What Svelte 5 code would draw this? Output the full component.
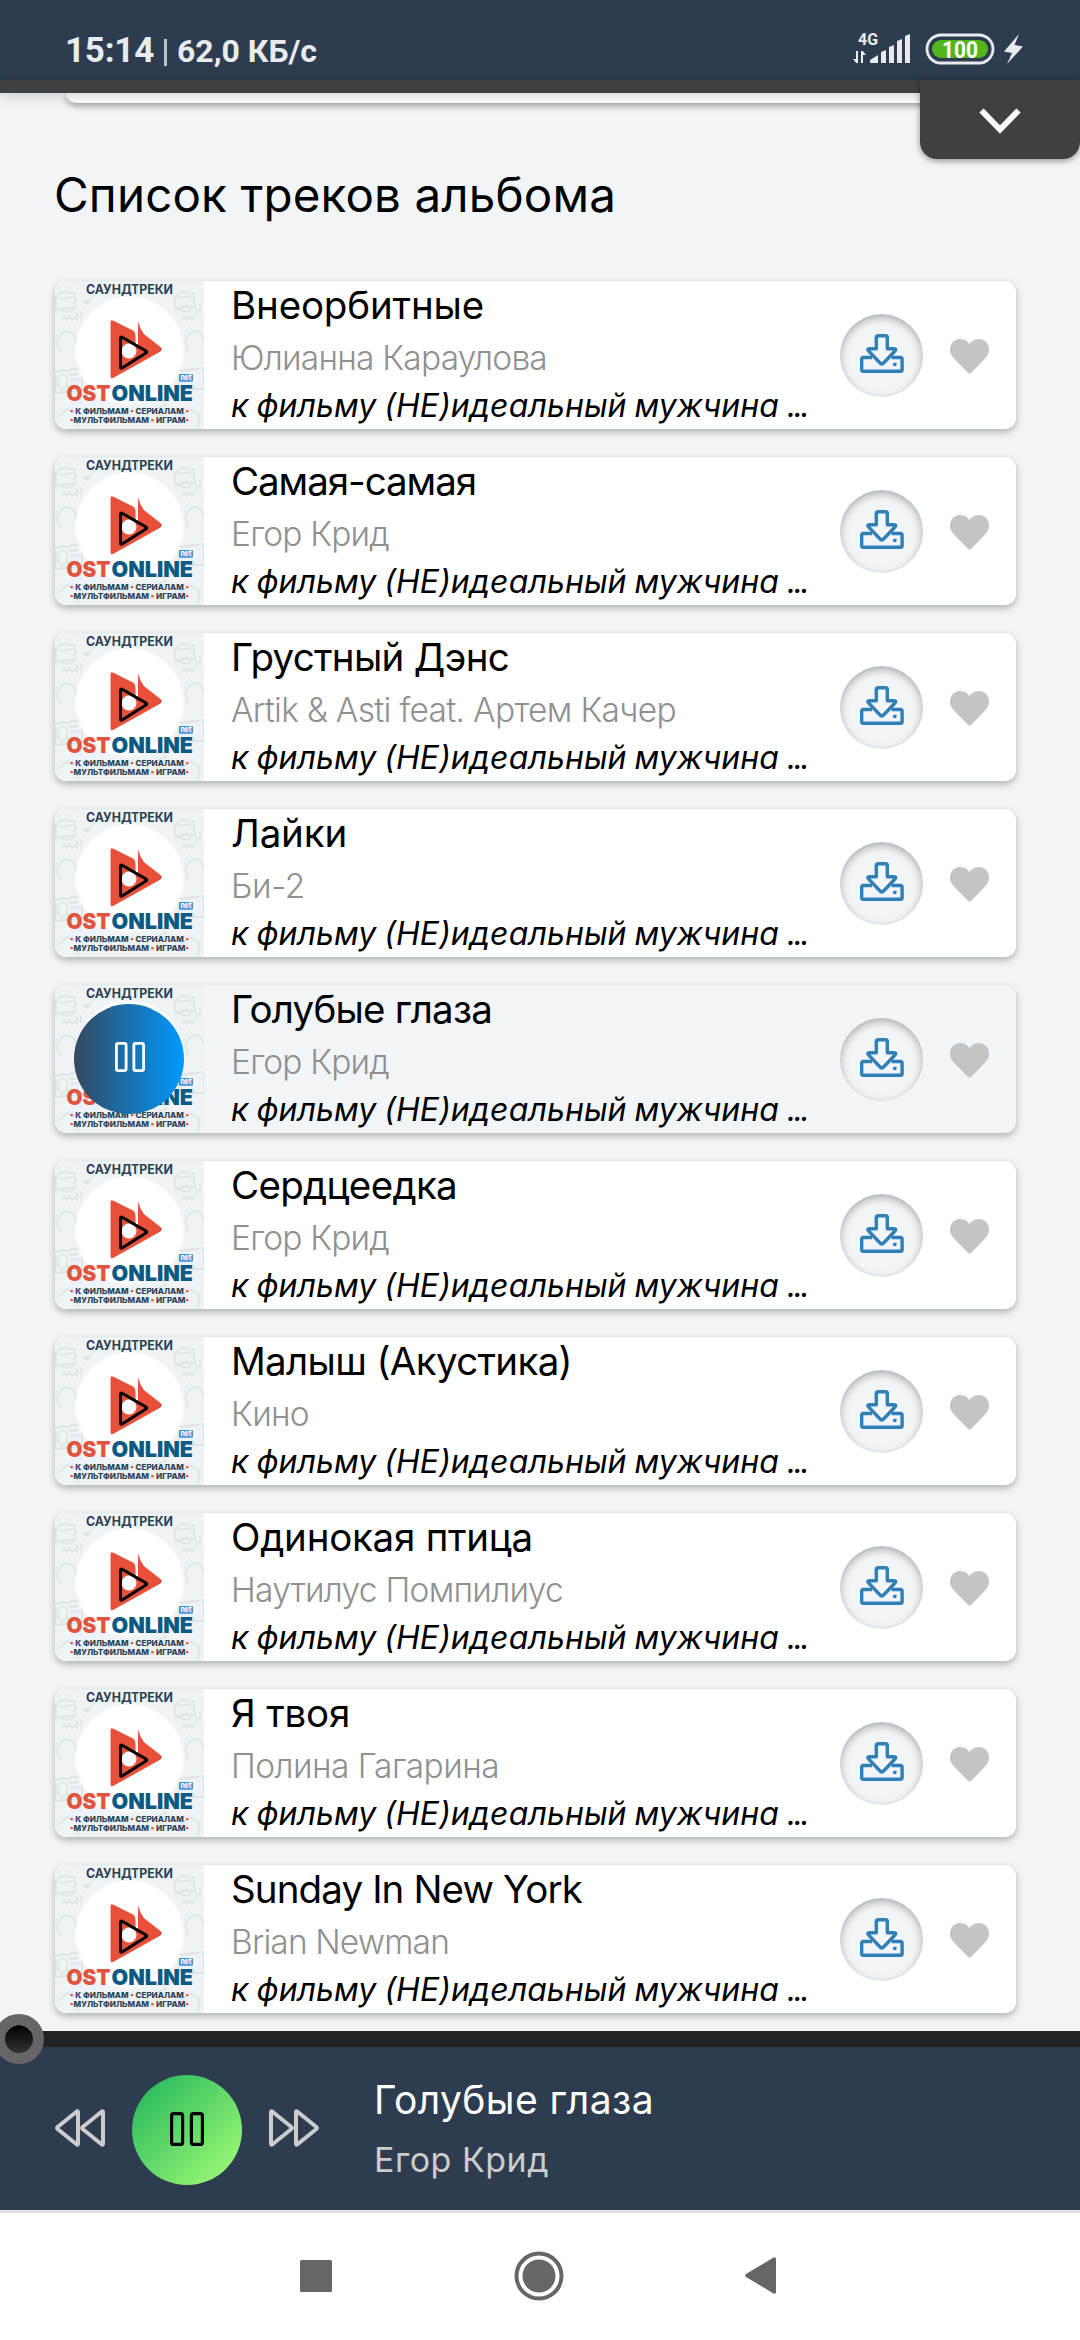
<script lang="ts">
  interface Track {
    title: string;
    artist: string;
    titleWidth: number;
    artistWidth: number;
    album?: string;
    active?: boolean;
  }

  const ALBUM = "к фильму (НЕ)идеальный мужчина";

  const tracks: Track[] = [
    { title: "Внеорбитные", artist: "Юлианна Караулова", titleWidth: 253, artistWidth: 316 },
    { title: "Самая-самая", artist: "Егор Крид", titleWidth: 245, artistWidth: 158 },
    { title: "Грустный Дэнс", artist: "Artik & Asti feat. Артем Качер", titleWidth: 278, artistWidth: 445 },
    { title: "Лайки", artist: "Би-2", titleWidth: 116, artistWidth: 74 },
    { title: "Голубые глаза", artist: "Егор Крид", titleWidth: 261, artistWidth: 158, active: true },
    { title: "Сердцеедка", artist: "Егор Крид", titleWidth: 226, artistWidth: 158 },
    { title: "Малыш (Акустика)", artist: "Кино", titleWidth: 341, artistWidth: 78 },
    { title: "Одинокая птица", artist: "Наутилус Помпилиус", titleWidth: 302, artistWidth: 332 },
    { title: "Я твоя", artist: "Полина Гагарина", titleWidth: 119, artistWidth: 268 },
    { title: "Sunday In New York", artist: "Brian Newman", titleWidth: 351, artistWidth: 218, album: "к фильму (НЕ)иделаьный мужчина" }
  ];

  // Spread the letters so that the text takes the given width
  function fit(node: HTMLElement, width: number) {
    node.style.letterSpacing = "0px";
    const natural = node.getBoundingClientRect().width;
    const count = (node.textContent || "").length;
    node.style.letterSpacing = `${(width - natural) / count}px`;
  }
</script>

{#snippet pause()}
  <svg class="pause" viewBox="0 0 34 34">
    <rect x="1.6" y="1.6" width="11" height="30.8" rx="2" />
    <rect x="21.4" y="1.6" width="11" height="30.8" rx="2" />
  </svg>
{/snippet}

{#snippet cover()}
  <svg class="art" viewBox="0 0 149 148">
    <rect width="149" height="148" fill="#eff3f5" />
    <g class="doodles">
      <path d="M1 17l5-6 13 1 2 14-8 5-12-3zM4 18l14-2M5 28l14-2M120 16l6-5 12 1 2 13-8 6-12-4zM122 17l14-2M123 27l15-2" />
      <path d="M7 39l3-3 2 3 3-3 2 3 3-3M127 39l3-3 2 3 3-3 2 3 3-3M29 20l3 3 3-3zM22 32v8M26 30v8M141 26v8M145 24v8" />
      <path d="M2 61c4-14 16-14 20-1M1 61l5 11M20 58l3 10M131 60c4-14 15-13 18 0M130 60l3 11" />
      <path d="M0 91l27-4v22l-27 3zM3 101a5 5 0 1 0 9 0a5 5 0 1 0-9 0M122 90l27-3v21h-24zM14 94l10-1M15 99l10-1" />
      <path d="M3 137l9-9 13 5-3 13M126 136l9-8 10 6-2 13M104 127l8-4M44 137q9-9 15 2" />
    </g>
    <circle cx="74.5" cy="69.5" r="54" fill="#fff" />
    <text x="31" y="13" textLength="87" lengthAdjust="spacingAndGlyphs" class="caption">САУНДТРЕКИ</text>
    <path
      d="M55.5 41Q55.5 38.5 58 39.5L78 49.5Q80.5 51 80.5 54V64L83 66V40.5Q86 50 90 54L105.5 66Q108 68.3 105.5 70.500L59 96.5Q55.5 98.5 55.5 95Z"
      fill="#e8503a"
    />
    <circle cx="74" cy="70" r="7.5" fill="#fff" />
    <path d="M65.5 57.5Q65.5 55.3 67.5 56.5L91 70Q92.5 71 91 72L67.5 86.8Q65.500 88 65.5 86Z" class="play" />
    <rect x="124" y="93" width="14" height="7.8" rx="1" fill="#4394d2" />
    <text x="125.5" y="99" textLength="11" lengthAdjust="spacingAndGlyphs" class="net">net</text>
    <text x="11.5" y="120" textLength="44" lengthAdjust="spacingAndGlyphs" class="logo" fill="#e2543f">OST</text>
    <text x="56.5" y="120" textLength="81.5" lengthAdjust="spacingAndGlyphs" class="logo" fill="#0b5a84">ONLINE</text>
    <text x="15" y="133" textLength="119" lengthAdjust="spacingAndGlyphs" class="small"
      ><tspan class="dot">•</tspan> К ФИЛЬМАМ <tspan class="dot">•</tspan> СЕРИАЛАМ <tspan class="dot">•</tspan></text
    >
    <text x="15" y="142.3" textLength="119" lengthAdjust="spacingAndGlyphs" class="small"
      ><tspan class="dot">•</tspan>МУЛЬТФИЛЬМАМ <tspan class="dot">•</tspan> ИГРАМ<tspan class="dot">•</tspan></text
    >
  </svg>
{/snippet}

<div class="screen">
  <header class="status">
    <div class="status-left">
      <span class="clock" use:fit={89}>15:14</span>
      <span class="bar"></span>
      <span class="speed" use:fit={140}>62,0 КБ/с</span>
    </div>
    <svg class="status-right" width="172" height="36" viewBox="851 30 172 36">
      <text x="857" y="44.5" textLength="20" lengthAdjust="spacingAndGlyphs" class="net-type">4G</text>
      <path d="M857 51v12h-1.800l-3.200-4h3v-8zM860 63V51h1.800l3.200 4h-3v8z" />
      <path d="M869 63v-3l8-5v8zM880 63V52l5-2v13zM888 63V47l5-2v18zM896 63V41l5-2v24zM904 63V36l5-2v29z" />
      <rect x="926" y="35" width="66" height="28" rx="14" fill="none" stroke="#e8ebef" stroke-width="2.8" />
      <rect x="931" y="40" width="56" height="18" rx="9" fill="#52b51c" />
      <text x="941" y="57.5" textLength="36" lengthAdjust="spacingAndGlyphs" class="level">100</text>
      <path d="M1018 34l-15 17.500 8 1.500-5 11 16-17.500-8.500-1.500z" />
    </svg>
  </header>

  <main>
    <div class="top-strip"></div>
    <div class="prev-card"></div>
    <button class="collapse" aria-label="Свернуть">
      <svg width="42" height="27" viewBox="0 0 42 27"><path d="M2.5 2.5L21 21.5 39.5 2.5" /></svg>
    </button>

    <h1><span use:fit={562}>Список треков альбома</span></h1>

    <ul>
      {#each tracks as track}
        <li class:active={track.active}>
          <div class="cover">
            {@render cover()}
            {#if track.active}
              <div class="playing">{@render pause()}</div>
            {/if}
          </div>
          <div class="info">
            <div class="title"><span use:fit={track.titleWidth}>{track.title}</span></div>
            <div class="artist"><span use:fit={track.artistWidth}>{track.artist}</span></div>
            <div class="album"><span use:fit={548}>{track.album ?? ALBUM}</span> <span class="dots">...</span></div>
          </div>
          <div class="download">
            <svg width="44" height="39" viewBox="0 0 44 39">
              <path d="M12 23.5H3.5Q1.7 23.5 1.7 25.3V35.5Q1.7 37.3 3.5 37.3H40.3Q42.1 37.3 42.1 35.5V25.3Q42.1 23.5 40.3 23.5H31.5" />
              <path d="M16.3 14.7V3.5Q16.3 1.7 18.1 1.7H25.5Q27.3 1.7 27.3 3.5V14.7H34Q37 14.7 35 17L23.3 29.2Q21.8 30.6 20.3 29.2L8.6 17Q6.6 14.7 9.6 14.7Z" />
              <circle cx="34.8" cy="30.3" r="1.9" />
            </svg>
          </div>
          <svg class="heart" width="39" height="35" viewBox="0 0 39 35">
            <path d="M17.7 33.7L3 18.5C-1 14 -1 7 3 3.1C7.3-1 14-1 18 3.3L19.5 4.9L21 3.3C25-1 31.7-1 36 3.1C40 7 40 14 36 18.5L21.3 33.7Q19.5 35.3 17.7 33.7Z" />
          </svg>
        </li>
      {/each}
    </ul>
  </main>

  <footer class="player">
    <div class="progress"><span class="thumb"></span></div>
    <div class="controls">
      <svg class="skip" width="50" height="38" viewBox="0 0 50 38">
        <path d="M23 3.5V34.5Q23 36.5 21.5 35.3L2.6 20Q1.5 19 2.6 18L21.5 2.7Q23 1.5 23 3.5ZM48 3.5V34.5Q48 36.5 46.5 35.3L27.6 20Q26.5 19 27.6 18L46.5 2.7Q48 1.5 48 3.5Z" />
      </svg>
      <div class="main-button">{@render pause()}</div>
      <svg class="skip" width="50" height="38" viewBox="0 0 50 38">
        <path d="M2 3.5V34.5Q2 36.5 3.5 35.3L22.4 20Q23.5 19 22.4 18L3.5 2.7Q2 1.5 2 3.5ZM27 3.5V34.5Q27 36.5 28.5 35.3L47.4 20Q48.5 19 47.4 18L28.5 2.7Q27 1.5 27 3.5Z" />
      </svg>
      <div class="now">
        <div class="now-title"><span use:fit={280}>Голубые глаза</span></div>
        <div class="now-artist"><span use:fit={175}>Егор Крид</span></div>
      </div>
    </div>
  </footer>

  <nav>
    <svg width="32" height="32" viewBox="0 0 32 32"><rect width="32" height="32" rx="1.5" /></svg>
    <svg width="50" height="50" viewBox="0 0 50 50">
      <circle cx="25" cy="25" r="22.5" fill="none" stroke="#666" stroke-width="4" />
      <circle cx="25" cy="25" r="16.5" />
    </svg>
    <svg width="31" height="37" viewBox="0 0 31 37"><path d="M28.5 0.5Q31 -0.5 31 2V35Q31 37.5 28.5 36.5L1 20Q-0.8 18.5 1 17Z" /></svg>
  </nav>
</div>

<style>
  :global(body) {
    margin: 0;
    background: #fff;
  }

  .screen {
    width: 1080px;
    height: 2340px;
    display: flex;
    flex-direction: column;
    overflow: hidden;
    background: #f1f5f8;
    font-family: Inter, Roboto, "Liberation Sans", sans-serif;
    white-space: nowrap;
  }

  /* Status bar */
  .status {
    flex: none;
    height: 80px;
    display: flex;
    justify-content: space-between;
    box-sizing: border-box;
    padding: 31px 56px 0 65px;
    background: #2d3d4f;
    color: #e8ebef;
    font-family: Roboto, sans-serif;
    font-weight: 700;
  }

  .status-left {
    display: flex;
    align-items: baseline;
    height: 40px;
    line-height: 40px;
  }

  .clock {
    font-size: 35px;
  }

  .bar {
    width: 3px;
    height: 27px;
    margin: 8px 10px 0 10px;
    align-self: flex-start;
    background: #bcc3cb;
  }

  .speed {
    font-size: 32px;
  }

  .status-right {
    margin-top: -1px;
    fill: #e8ebef;
  }

  .net-type {
    font: 700 17px Roboto, sans-serif;
  }

  .level {
    font: 700 24px Roboto, sans-serif;
    fill: #fff;
  }

  /* Track list */
  main {
    position: relative;
    flex: none;
    height: 1951px;
  }

  .top-strip {
    position: relative;
    z-index: 1;
    height: 13px;
    background: #404040;
    box-shadow: 0 2px 14px rgba(0, 0, 0, 0.2);
  }

  .prev-card {
    height: 10px;
    margin: 0 66px;
    background: #fff;
    border-radius: 0 0 13px 13px;
    box-shadow: 0 3px 7px rgba(0, 0, 0, 0.35);
  }

  .collapse {
    position: absolute;
    z-index: 2;
    top: 0;
    right: 0;
    width: 160px;
    height: 79px;
    padding: 6px 0 0;
    border: 0;
    border-radius: 0 0 17px 17px;
    background: #404040;
    box-shadow: 0 2px 6px rgba(0, 0, 0, 0.4);
  }

  .collapse path {
    fill: none;
    stroke: #fff;
    stroke-width: 6;
  }

  h1 {
    margin: 62px 0 56px 54px;
    height: 60px;
    line-height: 60px;
    font-size: 47.5px;
    font-weight: 400;
    color: #000;
  }

  ul {
    display: flex;
    flex-direction: column;
    gap: 28px;
    margin: 0 64px 0 55px;
    padding: 0;
    list-style: none;
  }

  li {
    display: flex;
    align-items: center;
    height: 148px;
    border-radius: 11px;
    background: #fff;
    box-shadow: 0 3px 7px rgba(0, 0, 0, 0.28);
  }

  li.active {
    background: #f1f5f8;
  }

  .cover {
    position: relative;
    width: 149px;
    height: 148px;
    border-radius: 11px 0 0 11px;
    overflow: hidden;
  }

  .art {
    display: block;
    width: 149px;
    height: 148px;
  }

  .art text {
    font-family: Inter, "Open Sans", sans-serif;
    font-weight: 800;
  }

  .doodles path {
    fill: none;
    stroke: #dfe4e7;
    stroke-width: 1.8;
  }

  .art .caption {
    font-size: 13px;
    font-weight: 700;
    fill: #2a4257;
  }

  .art .logo {
    font-size: 21.5px;
    font-weight: 900;
  }

  .art .small {
    font-size: 7.8px;
    fill: #2a4257;
  }

  .art .dot {
    fill: #e8503a;
  }

  .art .net {
    font-size: 7.5px;
    fill: #fff;
  }

  .play {
    fill: none;
    stroke: #000;
    stroke-width: 3;
  }

  .playing {
    position: absolute;
    top: 19px;
    left: 19px;
    width: 110px;
    height: 110px;
    display: flex;
    align-items: center;
    justify-content: center;
    border-radius: 50%;
    background: linear-gradient(90deg, #34495e, #0099ff);
  }

  .pause {
    width: 34px;
    height: 34px;
    fill: none;
    stroke: #000;
    stroke-width: 3.2;
  }

  .playing .pause {
    width: 30px;
    height: 30px;
    margin: 0 0 5px 2px;
    stroke: #fff;
  }

  .info {
    flex: 1;
    min-width: 0;
    padding-left: 27px;
    color: #000;
  }

  .title {
    height: 50px;
    line-height: 48px;
    font-size: 38.5px;
  }

  .artist {
    height: 50px;
    line-height: 54px;
    font-size: 33.5px;
    font-weight: 300;
    color: #909090;
  }

  .album {
    height: 48px;
    line-height: 50px;
    font-size: 32px;
    font-style: italic;
    word-spacing: -1px;
  }

  .dots {
    letter-spacing: -2.5px;
  }

  .download {
    width: 83px;
    height: 83px;
    margin-right: 27px;
    display: flex;
    align-items: center;
    justify-content: center;
    border-radius: 50%;
    background: #f1f5f8;
    box-shadow: inset 0 3px 8px rgba(0, 0, 0, 0.3);
  }

  .download svg {
    margin-top: -3px;
  }

  .download path {
    fill: none;
    stroke: #2f80b7;
    stroke-width: 3.4;
    stroke-linejoin: round;
  }

  .download circle {
    fill: #2f80b7;
  }

  .heart {
    margin: 2px 27px 0 0;
    fill: #c4c4c4;
  }

  /* Player */
  .player {
    position: relative;
    z-index: 3;
    flex: none;
    height: 179px;
    background: #2d3d4f;
  }

  .progress {
    position: relative;
    height: 16px;
    background: #222;
  }

  .thumb {
    position: absolute;
    top: -17px;
    left: -6px;
    width: 28px;
    height: 28px;
    border: 11px solid #666;
    border-radius: 50%;
    background: linear-gradient(#000, #333) padding-box;
  }

  .controls {
    display: flex;
    align-items: center;
    height: 163px;
    padding-left: 55px;
  }

  .skip {
    margin-top: -2px;
    fill: none;
    stroke: #ccc;
    stroke-width: 4;
    stroke-linejoin: round;
  }

  .main-button {
    width: 110px;
    height: 110px;
    margin: 3px 27px 0;
    display: flex;
    align-items: center;
    justify-content: center;
    border-radius: 50%;
    background: linear-gradient(135deg, #1db35b, #a8ff78);
  }

  .main-button .pause {
    margin-bottom: 3px;
  }

  .now {
    margin: 2px 0 0 55px;
  }

  .now-title {
    height: 59px;
    line-height: 58px;
    font-size: 39px;
    color: #fff;
  }

  .now-artist {
    height: 58px;
    line-height: 59px;
    font-size: 34px;
    color: #ccc;
  }

  /* System navigation */
  nav {
    flex: 1;
    display: flex;
    justify-content: space-between;
    align-items: center;
    box-sizing: border-box;
    padding: 0 304px 2px 300px;
    border-top: 3px solid #dfe1e2;
    background: #fff;
    fill: #666;
  }
</style>
